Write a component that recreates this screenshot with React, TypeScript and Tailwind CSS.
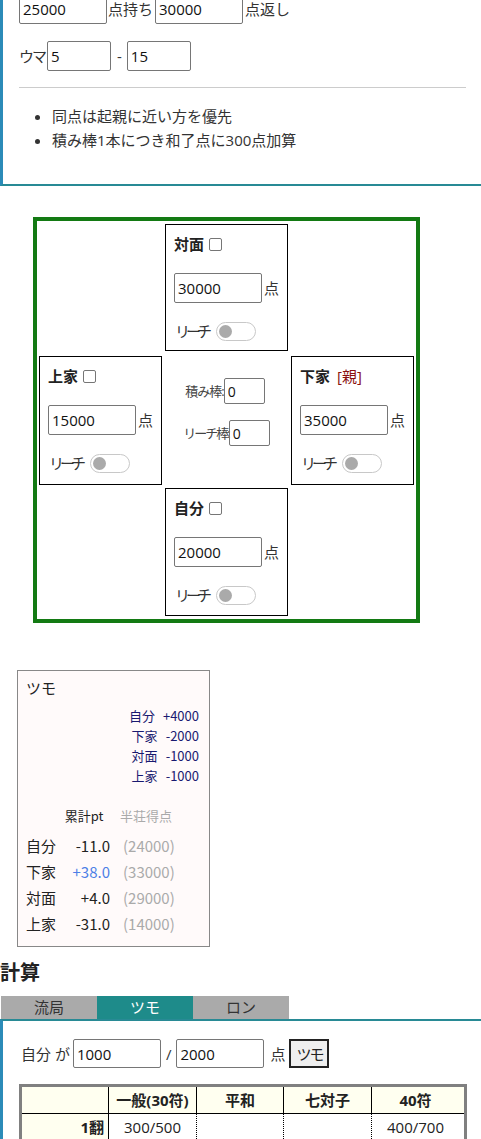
import React from "react";

const inp =
  "h-[30px] border border-[#767676] rounded-[2px] px-[3px] text-[15px] text-[#111] bg-white outline-none";

function Toggle() {
  return (
    <span className="inline-flex items-center w-[40px] h-[19px] rounded-full border border-[#c8c8c8] bg-white pl-[2px]">
      <span className="block w-[13px] h-[13px] rounded-full bg-[#aaaaaa]" />
    </span>
  );
}

function Check() {
  return (
    <span className="inline-block w-[13px] h-[13px] border border-[#767676] rounded-[2px] bg-white ml-[5px]" />
  );
}

function Player({
  name,
  score,
  oya,
  h,
}: {
  name: string;
  score: string;
  oya?: boolean;
  h: string;
}) {
  return (
    <div className={`border border-black bg-white px-[8px] pt-[8px] flex flex-col ${h}`}>
      <div className="h-[22px] flex items-center text-[15px] text-[#222]">
        <span className="font-bold">{name}</span>
        {oya ? (
          <span className="ml-[7px] text-[#8b1010]">[親]</span>
        ) : (
          <Check />
        )}
      </div>
      <div className="flex items-center mt-[18px] h-[30px]">
        <input className={`${inp} w-[88px]`} defaultValue={score} />
        <span className="ml-[2px] text-[15px] text-[#333]">点</span>
      </div>
      <div className="flex items-center mt-[18px] h-[20px]">
        <span className="text-[15px] text-[#333] tracking-[-4px] mr-[8px] ml-[1px]">リーチ</span>
        <Toggle />
      </div>
    </div>
  );
}

export default function App() {
  const rows = [
    ["1翻", "300/500", "", "", "400/700"],
    ["2翻", "500/1000", "400/700", "", "700/1300"],
    ["3翻", "1000/2000", "700/1300", "800/1600", "1300/2600"],
    ["4翻", "2000/3900", "1300/2600", "1600/3200", "2000/4000"],
  ];
  return (
    <div
      className="w-[481px] bg-white text-[#333] text-[15px] leading-[24px]"
      style={{ fontFamily: '"Open Sans", "Noto Sans CJK JP", sans-serif' }}
    >
      {/* settings section */}
      <div className="border-l-[3px] border-l-[#2b8bb8] border-b-2 border-b-[#288a95] pl-4 pr-[15px] pb-[32px]">
        <div className="flex items-center -mt-[6px] h-[30px]">
          <input className={`${inp} w-[88px]`} defaultValue="25000" />
          <span className="ml-[1px]">点持ち</span>
          <input className={`${inp} w-[88px] ml-[2px]`} defaultValue="30000" />
          <span className="ml-[2px]">点返し</span>
        </div>
        <div className="flex items-center mt-[17px] h-[30px]">
          <span className="tracking-[-2px]">ウマ</span>
          <input className={`${inp} w-[64px] ml-[2px]`} defaultValue="5" />
          <span className="ml-[6px]">-</span>
          <input className={`${inp} w-[64px] ml-[5px]`} defaultValue="15" />
        </div>
        <hr className="mt-[16px] border-0 border-t border-t-[#cccccc]" />
        <ul className="mt-[16px] list-disc pl-[33px]">
          <li>同点は起親に近い方を優先</li>
          <li>積み棒1本につき和了点に300点加算</li>
        </ul>
      </div>

      {/* table */}
      <div className="ml-[33px] mt-[31px] w-[387px] border-4 border-[#137a13] px-[2px] pt-[3px] pb-[3px]">
        <div className="grid grid-cols-[123px_123px_123px] gap-x-[3px]">
          <div />
          <Player name="対面" score="30000" h="h-[127px]" />
          <div />
        </div>
        <div className="grid grid-cols-[123px_123px_123px] gap-x-[3px] mt-[5px]">
          <Player name="上家" score="15000" h="h-[129px]" />
          <div className="flex flex-col items-center pt-[22px] text-[13px] text-[#444]">
            <div className="flex items-center ml-[-3px]">
              <span className="tracking-[-1px]">積み棒:</span>
              <input
                className="w-[41px] h-[26px] border border-[#767676] rounded-[2px] px-[3px] text-[14px] text-[#111] outline-none"
                defaultValue="0"
              />
            </div>
            <div className="flex items-center mt-[16px]">
              <span className="tracking-[-2px]">リーチ棒:</span>
              <input
                className="w-[41px] h-[26px] border border-[#767676] rounded-[2px] px-[3px] text-[14px] text-[#111] outline-none"
                defaultValue="0"
              />
            </div>
          </div>
          <Player name="下家" score="35000" oya h="h-[129px]" />
        </div>
        <div className="grid grid-cols-[123px_123px_123px] gap-x-[3px] mt-[3px]">
          <div />
          <Player name="自分" score="20000" h="h-[128px]" />
          <div />
        </div>
      </div>

      {/* result box */}
      <div
        className="ml-[17px] mt-[47px] w-[193px] h-[277px] border border-[#888888] bg-[#fffafa] pl-[8px] pr-[10px] pt-[7px] text-[#222]"
        style={{ fontFamily: '"Noto Sans CJK JP", "DejaVu Sans Mono", monospace' }}
      >
        <div className="leading-[20px] text-[15px]">ツモ</div>
        <div className="mt-[8px] text-[13px] leading-[20px] text-[#191970] text-right">
          {[
            ["自分", "+4000"],
            ["下家", "-2000"],
            ["対面", "-1000"],
            ["上家", "-1000"],
          ].map(([n, v]) => (
            <div key={n}>
              {n}
              <span className="ml-[8px]">{v}</span>
            </div>
          ))}
        </div>
        <div className="mt-[20px] grid grid-cols-[32px_52px_70px] text-[13px] leading-[20px]">
          <div />
          <div className="text-center">累計pt</div>
          <div className="text-center text-[#aaaaaa] pl-[2px]">半荘得点</div>
        </div>
        <div className="mt-[7px] grid grid-cols-[32px_52px_70px] text-[15px] leading-[26px]">
          {[
            ["自分", "-11.0", "(24000)", false],
            ["下家", "+38.0", "(33000)", true],
            ["対面", "+4.0", "(29000)", false],
            ["上家", "-31.0", "(14000)", false],
          ].map(([n, s, p, hi]) => (
            <React.Fragment key={n as string}>
              <div>{n}</div>
              <div className={`text-right ${hi ? "text-[#4d7fe6]" : ""}`}>{s}</div>
              <div className="pl-[13px] text-[#aaaaaa]">{p}</div>
            </React.Fragment>
          ))}
        </div>
      </div>

      {/* 計算 */}
      <h2 className="mt-[12px] mb-[9px] text-[20px] leading-[28px] font-bold text-[#222]">計算</h2>
      <div className="flex ml-[1px] h-[23px] text-[15px] leading-[23px]">
        <div className="w-[96px] bg-[#aaaaaa] text-center text-[#333]">流局</div>
        <div className="w-[96px] bg-[#1e8b8a] text-center text-white">ツモ</div>
        <div className="w-[96px] bg-[#aaaaaa] text-center text-[#333]">ロン</div>
      </div>
      <div className="border-t-2 border-t-[#288a95] border-l-[3px] border-l-[#2b8bb8] pl-4 pt-[18px] pb-[20px]">
        <div className="flex items-center h-[29px]">
          <span className="ml-[2px]">自分 が</span>
          <input className={`${inp} !h-[29px] w-[88px] ml-[3px]`} defaultValue="1000" />
          <span className="ml-[5px]">/</span>
          <input className={`${inp} !h-[29px] w-[88px] ml-[5px]`} defaultValue="2000" />
          <span className="ml-[6px]">点</span>
          <button className="ml-[4px] w-[40px] h-[29px] border-2 border-[#222] bg-[#efefef] text-[15px] text-[#222] tracking-[-2px]">
            ツモ
          </button>
        </div>
        <div className="mt-[16px] w-[448px] border-[3px] border-[#808080] text-[15px] text-[#222]">
          <div className="grid grid-cols-[87px_88px_87px_88px_87px] bg-[#fffff0] border-b border-b-black h-[27px] leading-[26px] font-bold">
            <div className="border-r border-r-black" />
            <div className="border-r border-r-black text-center">一般(30符)</div>
            <div className="border-r border-r-black text-center">平和</div>
            <div className="border-r border-r-black text-center">七対子</div>
            <div className="text-center">40符</div>
          </div>
          {rows.map((r) => (
            <div key={r[0]} className="grid grid-cols-[87px_88px_87px_88px_87px] h-[27px] leading-[27px]">
              <div className="border-r border-r-black bg-[#fffff0] text-right pr-[4px] font-bold">{r[0]}</div>
              <div className="border-r border-dotted border-r-black text-center">{r[1]}</div>
              <div className="border-r border-dotted border-r-black text-center">{r[2]}</div>
              <div className="border-r border-dotted border-r-black text-center">{r[3]}</div>
              <div className="text-center">{r[4]}</div>
            </div>
          ))}
        </div>
      </div>
    </div>
  );
}
